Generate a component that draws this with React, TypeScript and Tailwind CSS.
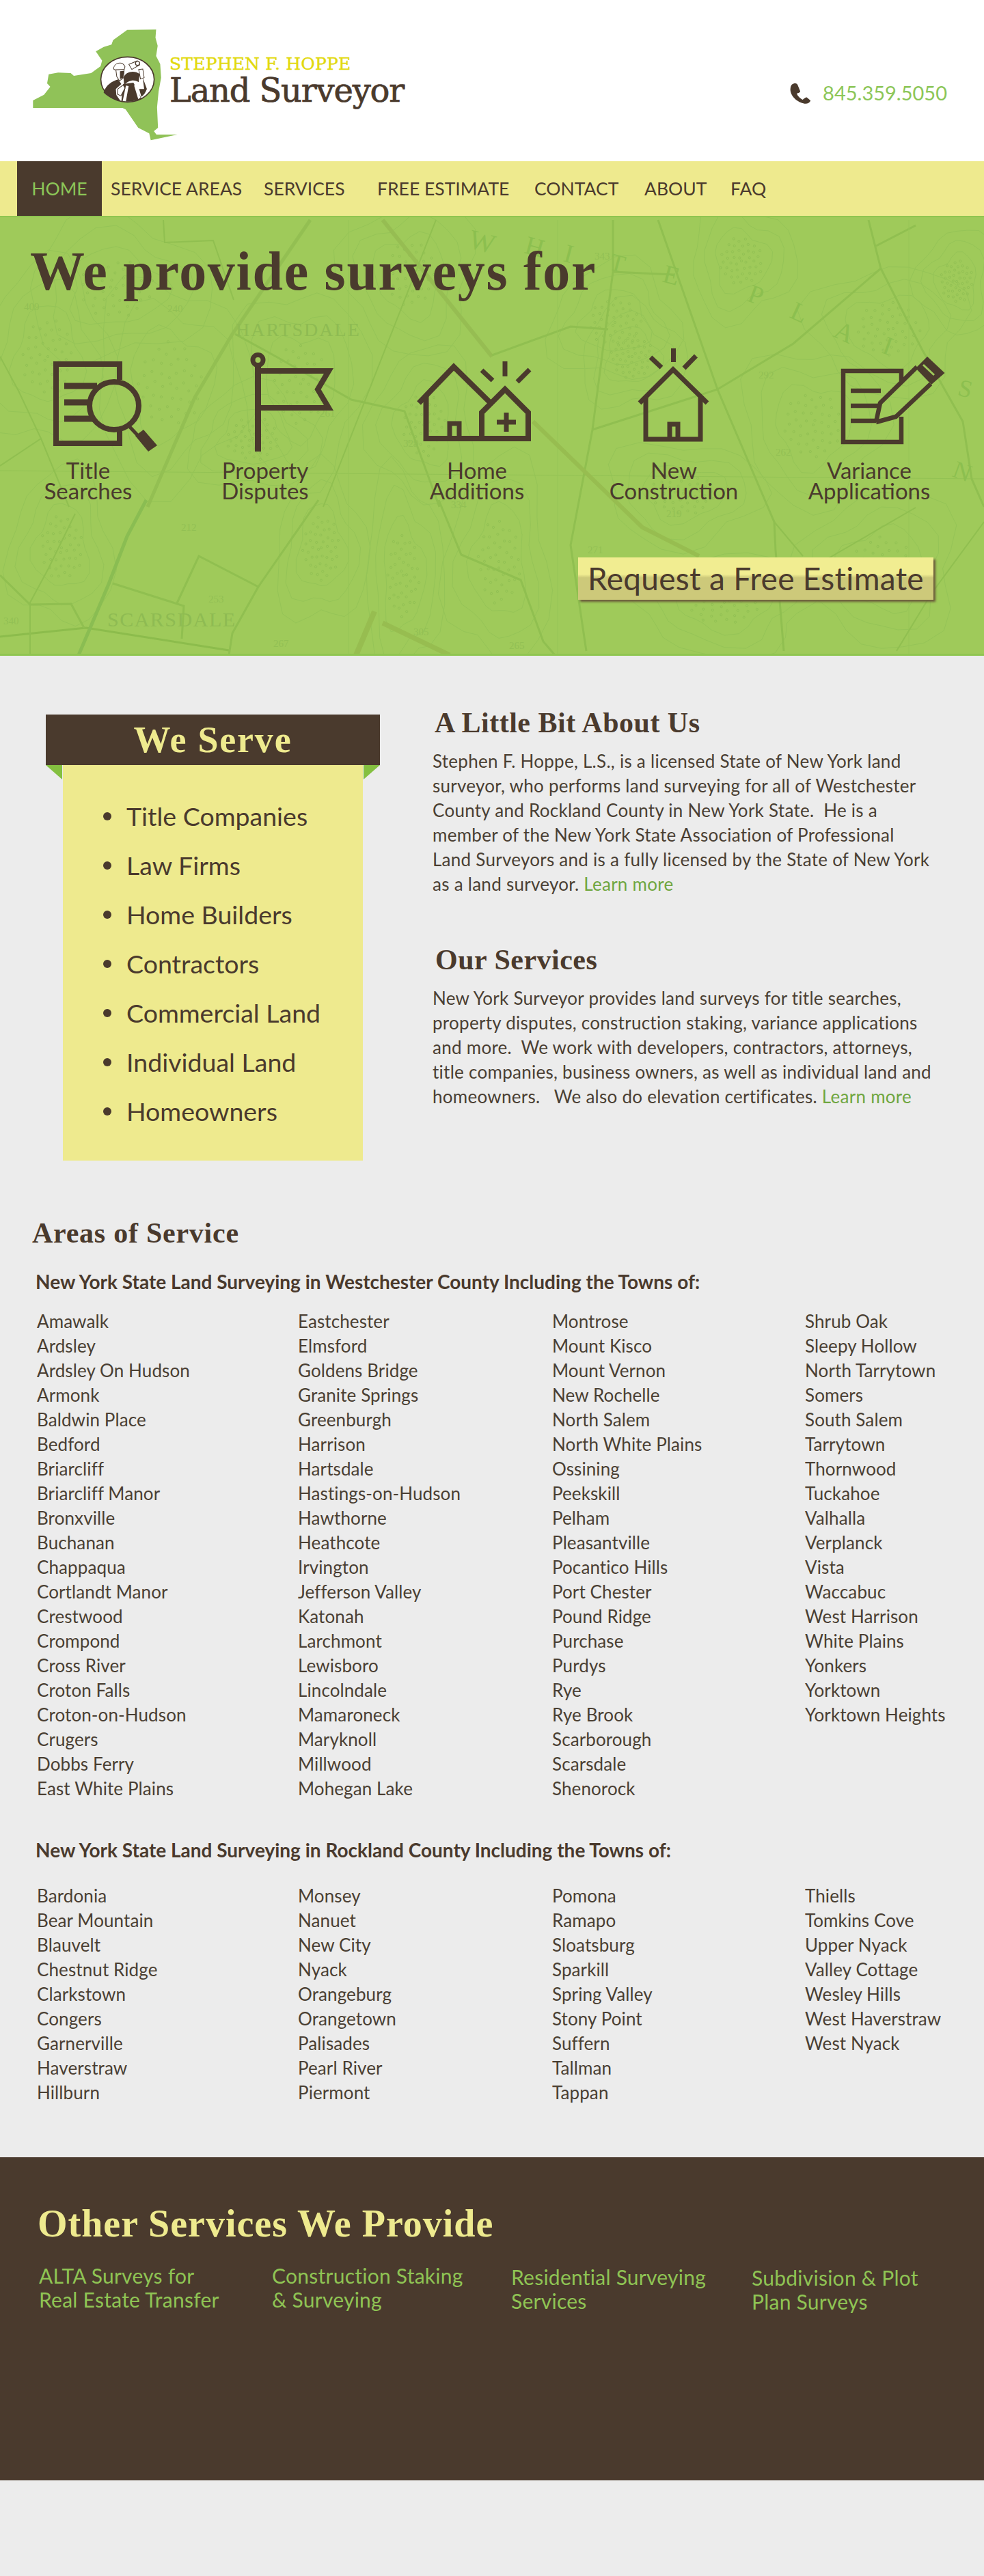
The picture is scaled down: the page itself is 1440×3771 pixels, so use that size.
import React from "react";

const BROWN = "#4a3a2d";

function MapTexture() {
  const roads: [string, number, string][] = [
    ["M0 930L126 917L335 950", 3, "#8cbc4c"],
    ["M214 730L186 783L159 853L132 917L115 957", 5, "#8abd52"],
    ["M165 852L269 885L266 933", 3, "#90bf50"],
    ["M258 883L291 812L378 857", 3, "#90bf50"],
    ["M466 730L378 857L340 925L335 957", 3, "#90bf50"],
    ["M642 730L675 810L762 847L795 937L812 957", 3, "#90bf50"],
    ["M560 910L658 957", 7, "#97bd50"],
    ["M548 893L521 957", 8, "#97bd50"],
    ["M110 750L71 830L44 880L44 957", 2, "#90bf50"],
    ["M0 840L44 883L104 882L123 917", 3, "#90bf50"],
    ["M239 320L241 353L312 350L342 437", 2, "#90bf50"],
    ["M454 320L340 487L285 580L216 740", 5, "#93bf52"],
    ["M344 487L404 520L514 583L592 600L643 740", 3, "#90bf50"],
    ["M560 320L720 520", 6, "#96bd52"],
    ["M638 320L473 740", 2, "#90bf50"],
    ["M0 687L720 693L1440 699", 1, "#93c254"],
    ["M60 640L0 680M60 640L27 570L0 520M60 640L101 740", 2, "#90bf50"],
    ["M963 320L1050 568L1133 762L1135 804L1147 951", 3, "#90bf50"],
    ["M897 320L897 396L867 627L835 796L858 951", 3, "#90bf50"],
    ["M897 396L986 400", 3, "#90bf50"],
    ["M720 518L835 476L890 480", 3, "#90bf50"],
    ["M867 627L1050 568L1161 501L1289 391", 3, "#90bf50"],
    ["M1271 320L1289 391L1349 509L1409 615L1422 699L1440 740", 3, "#90bf50"],
    ["M1282 358L1340 328", 3, "#90bf50"],
    ["M816 320V960M510 320V960M1330 320V960", 1, "#96c557"],
    ["M780 615L940 770L1023 812", 6, "#97bd50"],
    ["M1133 762L1175 812M1340 741L1211 816M1440 762L1363 867L1312 951", 2, "#90bf50"],
  ];
  const blobs = [
    [70, 520, 50, 70], [170, 420, 70, 55], [250, 560, 60, 80], [440, 560, 50, 75], [600, 400, 50, 60],
    [620, 620, 40, 60], [900, 470, 50, 45], [925, 520, 40, 40], [1085, 380, 40, 45], [1190, 620, 55, 60],
    [1300, 480, 60, 50], [1400, 410, 30, 40], [90, 800, 40, 60], [470, 800, 35, 60], [590, 840, 30, 80],
    [1000, 720, 60, 40], [1060, 880, 70, 40], [1290, 830, 60, 60], [730, 820, 40, 80], [370, 640, 50, 40],
  ];
  const contours: string[] = [];
  const dots: [number, number][] = [];
  blobs.forEach(([cx, cy, rx, ry], b) => {
    for (let ring = 0; ring < 3; ring++) {
      const k = 1 + ring * 0.45;
      let d = "";
      for (let i = 0; i <= 24; i++) {
        const a = (i / 24) * Math.PI * 2;
        const w = 1 + 0.14 * Math.sin(a * 3 + b) + 0.08 * Math.sin(a * 5 + b * 2 + ring);
        const x = cx + Math.cos(a) * rx * k * w;
        const y = cy + Math.sin(a) * ry * k * w;
        d += `${i === 0 ? "M" : "L"}${x.toFixed(1)} ${y.toFixed(1)}`;
      }
      contours.push(d + "Z");
    }
    for (let i = 0; i < 46; i++) {
      const a = i * 2.399 + b;
      const r = Math.sqrt(i / 46);
      dots.push([cx + Math.cos(a) * rx * r * 0.8, cy + Math.sin(a) * ry * r * 0.8]);
    }
  });
  const letters: [string, number, number, number, number][] = [
    ["W", 684, 360, 40, 15], ["H", 766, 368, 38, 15], ["I", 823, 380, 38, 15], ["T", 890, 392, 36, 15], ["E", 968, 410, 38, 15],
    ["P", 1092, 438, 38, 20], ["L", 1154, 462, 38, 25], ["A", 1218, 490, 38, 25], ["I", 1289, 514, 38, 20], ["N", 1392, 695, 36, 20], ["S", 1400, 576, 36, 15],
  ];
  const nums: [string, number, number][] = [
    ["240", 245, 455], ["409", 35, 452], ["261", 468, 608], ["329", 590, 652], ["343", 870, 378], ["262", 1135, 665],
    ["219", 975, 755], ["271", 860, 808], ["292", 1110, 552], ["212", 265, 775], ["253", 305, 880], ["267", 400, 945],
    ["305", 605, 928], ["265", 745, 948], ["340", 5, 912], ["334", 660, 742],
  ];
  return (
    <svg className="absolute left-0 top-0 h-[644px] w-[1440px]" viewBox="0 316 1440 644" aria-hidden="true">
      {contours.map((d, i) => (
        <path key={i} d={d} fill="none" stroke="#95c457" strokeWidth="1" />
      ))}
      {dots.map(([x, y], i) => (
        <circle key={i} cx={x} cy={y} r="1.6" fill="none" stroke="#92c154" strokeWidth="1" />
      ))}
      {roads.map(([d, w, c], i) => (
        <path key={i} d={d} fill="none" stroke={c} strokeWidth={w} />
      ))}
      <text x="345" y="490" fontFamily="Liberation Serif, serif" fontSize="28" letterSpacing="2" fill="#8ebb52">HARTSDALE</text>
      <text x="157" y="915" fontFamily="Liberation Serif, serif" fontSize="30" letterSpacing="1.5" fill="#8ebb52">SCARSDALE</text>
      {letters.map(([t, x, y, s, r], i) => (
        <text key={i} x={x} y={y} fontFamily="Liberation Serif, serif" fontSize={s} fill="#8cbf4f" transform={`rotate(${r} ${x} ${y})`}>{t}</text>
      ))}
      {nums.map(([t, x, y], i) => (
        <text key={i} x={x} y={y} fontFamily="Liberation Serif, serif" fontSize="15" fill="#92c054">{t}</text>
      ))}
    </svg>
  );
}

function Logo() {
  return (
    <svg className="ml-[46px] mt-[42px] h-[165px] w-[216px] shrink-0" viewBox="100 125 470 495" preserveAspectRatio="none" aria-hidden="true">
      <path
        fill="#90c258"
        d="M405 130L497 129L495 165L502 200L497 245L510 280L513 340L505 400L500 470L503 560L490 575L498 590L565 590L480 615L475 585L440 560L400 480L390 473L105 473L105 440L140 415L160 380L150 365L155 325L185 318L225 320L235 332L290 320L320 290L325 265L305 225L330 205L355 195L360 175Z"
      />
      <g transform="translate(305 240) scale(.726 1)">
        <ellipse cx="139" cy="108" rx="117" ry="99" fill="#fff" stroke={BROWN} strokeWidth="5" />
        <path fill={BROWN} d="M34 165C46 130 72 116 98 108L112 128L88 150L90 176L108 202C80 198 52 185 34 165Z" />
        <path fill={BROWN} d="M120 128L165 122L200 190C180 202 150 208 112 204Z" />
        <path fill="#fff" d="M132 135L144 137L132 204L118 202ZM168 135L178 130L196 188L186 194Z" />
        <path fill={BROWN} d="M122 100C132 70 172 68 192 84L188 120C170 106 142 110 124 134Z" />
        <path fill="#fff" stroke={BROWN} strokeWidth="3" d="M145 42L182 26L192 44L158 64Z" />
        <circle cx="183" cy="37" r="9" fill="#fff" stroke={BROWN} strokeWidth="4" />
        <path fill="#fff" stroke={BROWN} strokeWidth="3" d="M78 62C78 36 116 24 128 52L124 66L84 66Z" />
        <path fill="#fff" stroke={BROWN} strokeWidth="3" d="M88 66L124 64L122 100L104 114L92 96Z" />
        <path fill={BROWN} d="M106 72L124 70L120 100L106 106Z" />
        <path fill="#fff" stroke={BROWN} strokeWidth="3" d="M96 150L120 132L128 146L110 180L94 172Z" />
        <path fill="#fff" stroke={BROWN} strokeWidth="3" d="M188 64L206 62L212 100L196 106Z" />
        <path fill={BROWN} d="M206 100L224 150C218 166 210 178 200 184L190 150L212 150Z" />
      </g>
    </svg>
  );
}

function Phone() {
  return (
    <svg className="h-[33px] w-[33px] shrink-0" viewBox="950 355 72 98" preserveAspectRatio="none" aria-hidden="true">
      <path fill={BROWN} d="M960 365C968 358 975 360 977 368L985 395C985 403 976 403 974 405C976 415 985 428 993 432C997 428 1001 422 1006 422L1018 436C1015 448 1003 452 995 448C972 440 950 410 954 380C955 372 957 368 960 365Z" />
    </svg>
  );
}

const iconProps = { fill: "none", stroke: BROWN, strokeWidth: 8 } as const;

const services = [
  {
    left: 9, ml: "ml-[9px]", a: "Title", b: "Searches",
    icon: (
      <g {...iconProps}>
        <path d="M175 556V533H82V649H175V627" />
        <path strokeWidth="9" d="M94 565H142M94 589H130M94 613H138" />
        <ellipse cx="167" cy="594" rx="36" ry="35" />
        <path strokeWidth="5" d="M190 625L204 640" />
        <path fill={BROWN} stroke="none" d="M198 638L210 629L230 652L217 661Z" />
      </g>
    ),
  },
  {
    left: 268, ml: "ml-[19px]", a: "Property", b: "Disputes",
    icon: (
      <g {...iconProps}>
        <path strokeWidth="9" d="M377.5 535V661" />
        <circle cx="377.5" cy="527" r="7.5" strokeWidth="7" />
        <path d="M382 543H481L465 570L481 597H382" />
      </g>
    ),
  },
  {
    left: 578, ml: "ml-[70px]", a: "Home", b: "Additions",
    icon: (
      <g {...iconProps}>
        <path d="M613 590L664 537L720 592" />
        <path d="M623.5 580V642H773V604L739 570L705 604V642" />
        <path strokeWidth="7" d="M658 642V620H672V642" />
        <path strokeWidth="7" d="M739 529V551M775 541L757 559M705 542L721 557M741 604V632M727 618H755" />
      </g>
    ),
  },
  {
    left: 866, ml: "ml-[48px]", a: "New", b: "Construction",
    icon: (
      <g {...iconProps} strokeWidth={7}>
        <path d="M936 590L985 541L1035 590" />
        <path d="M945 580V643H1025V580" />
        <path d="M980 643V621H992V643" />
        <path d="M985.5 510V530M952 523L968 538M1018.5 521L1001 539" />
      </g>
    ),
  },
  {
    left: 1152, ml: "ml-[46px]", a: "Variance", b: "Applications",
    icon: (
      <g {...iconProps} strokeWidth={6.5}>
        <path d="M1319 558V543H1234V647H1319V610" />
        <path d="M1245 572H1289M1245 594H1289M1245 616H1282" />
        <path d="M1282 618L1288 590L1342 537M1282 618L1311 610L1362 562" />
        <path fill={BROWN} stroke="none" d="M1340 539L1357 522L1382.5 546L1363 563Z" />
        <path stroke="#9fca5a" strokeWidth="3" d="M1351 534L1367 549" />
      </g>
    ),
  },
];

const west = [
  ["Amawalk", "Ardsley", "Ardsley On Hudson", "Armonk", "Baldwin Place", "Bedford", "Briarcliff", "Briarcliff Manor", "Bronxville", "Buchanan", "Chappaqua", "Cortlandt Manor", "Crestwood", "Crompond", "Cross River", "Croton Falls", "Croton-on-Hudson", "Crugers", "Dobbs Ferry", "East White Plains"],
  ["Eastchester", "Elmsford", "Goldens Bridge", "Granite Springs", "Greenburgh", "Harrison", "Hartsdale", "Hastings-on-Hudson", "Hawthorne", "Heathcote", "Irvington", "Jefferson Valley", "Katonah", "Larchmont", "Lewisboro", "Lincolndale", "Mamaroneck", "Maryknoll", "Millwood", "Mohegan Lake"],
  ["Montrose", "Mount Kisco", "Mount Vernon", "New Rochelle", "North Salem", "North White Plains", "Ossining", "Peekskill", "Pelham", "Pleasantville", "Pocantico Hills", "Port Chester", "Pound Ridge", "Purchase", "Purdys", "Rye", "Rye Brook", "Scarborough", "Scarsdale", "Shenorock"],
  ["Shrub Oak", "Sleepy Hollow", "North Tarrytown", "Somers", "South Salem", "Tarrytown", "Thornwood", "Tuckahoe", "Valhalla", "Verplanck", "Vista", "Waccabuc", "West Harrison", "White Plains", "Yonkers", "Yorktown", "Yorktown Heights"],
];
const rock = [
  ["Bardonia", "Bear Mountain", "Blauvelt", "Chestnut Ridge", "Clarkstown", "Congers", "Garnerville", "Haverstraw", "Hillburn"],
  ["Monsey", "Nanuet", "New City", "Nyack", "Orangeburg", "Orangetown", "Palisades", "Pearl River", "Piermont"],
  ["Pomona", "Ramapo", "Sloatsburg", "Sparkill", "Spring Valley", "Stony Point", "Suffern", "Tallman", "Tappan"],
  ["Thiells", "Tomkins Cove", "Upper Nyack", "Valley Cottage", "Wesley Hills", "West Haverstraw", "West Nyack"],
];

function Towns({ cols }: { cols: string[][] }) {
  return (
    <div className="grid grid-cols-[382px_372px_370px_1fr] pl-[54px] text-[26px] leading-[36px] tracking-[0.1px] text-[#4a3f33]">
      {cols.map((c, i) => (
        <ul key={i}>
          {c.map((t) => (
            <li key={t}>{t}</li>
          ))}
        </ul>
      ))}
    </div>
  );
}

const serveItems = ["Title Companies", "Law Firms", "Home Builders", "Contractors", "Commercial Land", "Individual Land", "Homeowners"];

const serif = "font-['Liberation_Serif',serif] font-bold";

export default function App() {
  return (
    <div className="min-h-[3771px] w-[1440px] overflow-hidden bg-[#ececec] font-['Lato',sans-serif] text-[#4a3a2d]">
      <header className="relative flex h-[236px] bg-white">
        <Logo />
        <div className="ml-[-14px] mt-[79px] flex flex-col">
          <div className="font-['DejaVu_Serif',serif] text-[25px] leading-[30px] tracking-[0.2px] text-[#e2d90c] [-webkit-text-stroke:0.4px_#e2d90c]">STEPHEN F. HOPPE</div>
          <div className="mt-[-5px] whitespace-nowrap font-['DejaVu_Serif',serif] text-[48px] leading-[56px] tracking-[-1.2px] text-[#4a3a2d] [-webkit-text-stroke:0.7px_#4a3a2d]">Land Surveyor</div>
        </div>
        <div className="absolute right-[54px] top-[118px] flex items-center gap-[16px]">
          <Phone />
          <span className="text-[29px] leading-[36px] text-[#8cc658]">845.359.5050</span>
        </div>
      </header>

      <nav className="flex h-[80px] items-center bg-[#eeea8e] pl-[25px] text-[26.5px] leading-[30px]">
        <a className="flex h-full w-[124px] items-center justify-center bg-[#4a3a2d] text-[#8cc658]">HOME</a>
        <a className="w-[237px] whitespace-nowrap pl-[13px]">SERVICE AREAS</a>
        <a className="w-[166px] whitespace-nowrap">SERVICES</a>
        <a className="w-[230px] whitespace-nowrap">FREE ESTIMATE</a>
        <a className="w-[161px] whitespace-nowrap">CONTACT</a>
        <a className="w-[126px] whitespace-nowrap">ABOUT</a>
        <a className="whitespace-nowrap">FAQ</a>
      </nav>

      <section className="relative h-[644px] overflow-hidden border-t-2 border-b-[3px] border-[#8fc550] bg-[#9fca5a]">
        <MapTexture />
        <div className="relative">
          <h1 className={`${serif} ml-[44px] mt-[34px] whitespace-nowrap text-[80px] leading-[90px] tracking-[1.7px]`}>We provide surveys for</h1>
          <div className="mt-[63px] flex">
            {services.map((s) => (
              <div key={s.a} className={`${s.ml} w-[240px] shrink-0`}>
                <svg className="block h-[160px] w-[240px]" viewBox={`${s.left} 505 240 160`} aria-hidden="true">
                  {s.icon}
                </svg>
                <div className="mt-[8px] text-center text-[33px] leading-[30px]">
                  {s.a}
                  <br />
                  {s.b}
                </div>
              </div>
            ))}
          </div>
          <a className="ml-[846px] mt-[83px] flex h-[62px] w-[520px] items-center justify-center whitespace-nowrap bg-[linear-gradient(#f1ed91_0%,#f1ed91_40%,#cdc97a_48%,#cdc97a_100%)] text-[46px] leading-[50px] tracking-[0.3px] shadow-[3px_3px_3px_#6b5a3a]">
            Request a Free Estimate
          </a>
        </div>
      </section>

      <section className="flex">
        <div className="ml-[67px] mt-[86px] w-[489px] shrink-0">
          <div className="relative">
            <h2 className={`${serif} flex h-[74px] items-center justify-center bg-[#4a3a2d] text-[54px] tracking-[1.8px] text-[#eeea8e]`}>We Serve</h2>
            <svg className="absolute left-0 top-[74px] h-[21px] w-[24px]" viewBox="0 0 24 21" aria-hidden="true">
              <path d="M0 0H24V21Z" fill="#84c040" />
            </svg>
            <svg className="absolute right-0 top-[74px] h-[21px] w-[24px]" viewBox="0 0 24 21" aria-hidden="true">
              <path d="M24 0H0V21Z" fill="#84c040" />
            </svg>
          </div>
          <ul className="mx-[25px] h-[579px] bg-[#eeea8e] pl-[59px] pt-[39px]">
            {serveItems.map((t) => (
              <li key={t} className="flex h-[72px] items-center text-[37.5px]">
                <span className="mr-[22px] h-[12px] w-[12px] shrink-0 rounded-full bg-[#4a3a2d]" />
                {t}
              </li>
            ))}
          </ul>
        </div>
        <div className="ml-[77px] mt-[74px] w-[780px] text-[26px] leading-[36px] tracking-[0.27px] text-[#4a3f33]">
          <h3 className={`${serif} ml-[3px] text-[42px] leading-[48px] tracking-[0.5px] text-[#4a3a2d]`}>A Little Bit About Us</h3>
          <p className="mt-[14px] whitespace-nowrap">
            Stephen F. Hoppe, L.S., is a licensed State of New York land<br />
            surveyor, who performs land surveying for all of Westchester<br />
            County and Rockland County in New York State.&nbsp; He is a<br />
            member of the New York State Association of Professional<br />
            Land Surveyors and is a fully licensed by the State of New York<br />
            as a land surveyor. <a className="text-[#6fa640]">Learn more</a>
          </p>
          <h3 className={`${serif} ml-[4px] mt-[69px] text-[42px] leading-[48px] tracking-[0.5px] text-[#4a3a2d]`}>Our Services</h3>
          <p className="mt-[14px] whitespace-nowrap">
            New York Surveyor provides land surveys for title searches,<br />
            property disputes, construction staking, variance applications<br />
            and more.&nbsp; We work with developers, contractors, attorneys,<br />
            title companies, business owners, as well as individual land and<br />
            homeowners.&nbsp;&nbsp; We also do elevation certificates. <a className="text-[#6fa640]">Learn more</a>
          </p>
        </div>
      </section>

      <section className="pb-[77px]">
        <h2 className={`${serif} ml-[47px] mt-[82px] text-[42px] leading-[48px] tracking-[0.75px]`}>Areas of Service</h2>
        <h4 className="ml-[52px] mt-[31px] text-[28px] font-bold leading-[32px]">New York State Land Surveying in Westchester County Including the Towns of:</h4>
        <div className="mt-[24px]">
          <Towns cols={west} />
        </div>
        <h4 className="ml-[52px] mt-[56px] text-[28px] font-bold leading-[32px]">New York State Land Surveying in Rockland County Including the Towns of:</h4>
        <div className="mt-[33px]">
          <Towns cols={rock} />
        </div>
      </section>

      <section className="h-[473px] bg-[#4a3a2d] pt-[67px]">
        <h2 className={`${serif} ml-[55px] text-[56px] leading-[60px] tracking-[1px] text-[#eeea8e]`}>Other Services We Provide</h2>
        <div className="mt-[29px] flex pl-[57px] text-[30px] leading-[35px] tracking-[0.25px] text-[#8fc454]">
          <div className="w-[341px]">ALTA Surveys for<br />Real Estate Transfer</div>
          <div className="w-[350px]">Construction Staking<br />&amp; Surveying</div>
          <div className="mt-[2px] w-[352px]">Residential Surveying<br />Services</div>
          <div className="mt-[3px]">Subdivision &amp; Plot<br />Plan Surveys</div>
        </div>
      </section>
    </div>
  );
}
